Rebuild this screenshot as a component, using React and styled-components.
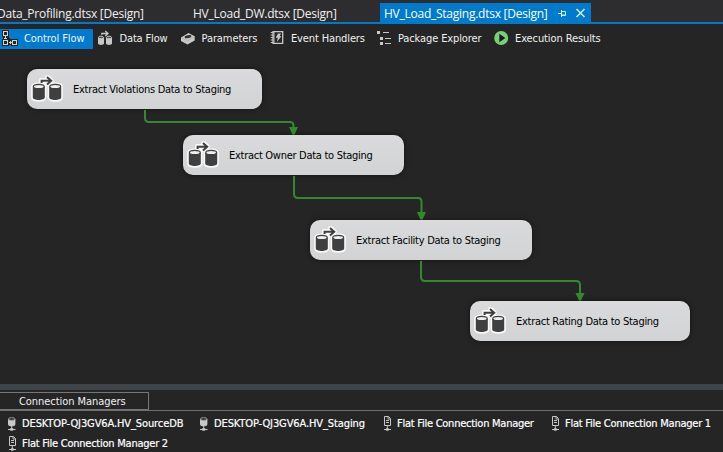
import React from "react";
import styled, { createGlobalStyle } from "styled-components";

const GlobalStyle = createGlobalStyle`
  * { box-sizing: border-box; }
  body { margin: 0; background: #252526; overflow: hidden; }
`;

const Window = styled.div`
  width: 723px;
  height: 452px;
  display: flex;
  flex-direction: column;
  overflow: hidden;
  background: #252526;
  color: #f1f1f1;
  font: 11px/14px "DejaVu Sans Condensed", "DejaVu Sans", sans-serif;
  white-space: nowrap;
`;

const TabStrip = styled.header`
  height: 24px;
  flex: none;
  display: flex;
  align-items: stretch;
  padding-top: 3px;
  background: #2d2d30;
  box-shadow: inset 0 -2px #007acc;
`;

const DocumentTab = styled.div`
  flex: none;
  width: ${(p) => p.$width}px;
  padding-left: ${(p) => p.$inset || 0}px;
  display: flex;
  align-items: center;
  background: ${(p) => (p.$active ? "#007acc" : "transparent")};
  color: ${(p) => (p.$active ? "#ffffff" : "#f1f1f1")};
  font: 12px/20px "Open Sans", "Noto Sans", sans-serif;
  letter-spacing: -0.25px;
`;

const TabTitle = styled.span`
  flex: none;
  width: ${(p) => p.$width}px;
`;

const ScrolledTitle = styled.span`
  margin-left: -3px;
`;

const Icon = styled.svg`
  flex: none;
  display: block;
  width: ${(p) => p.$width || 18}px;
  height: ${(p) => p.$height || 18}px;
`;

const Toolbar = styled.nav`
  height: 32px;
  flex: none;
  display: flex;
  align-items: flex-start;
  padding-top: 5px;
`;

const ViewButton = styled.div`
  flex: none;
  width: ${(p) => p.$width}px;
  margin-right: ${(p) => (p.$active ? 3 : 0)}px;
  height: 20px;
  display: flex;
  align-items: center;
  gap: ${(p) => p.$gap}px;
  padding-left: 1px;
  background: ${(p) => (p.$active ? "#007acc" : "transparent")};
  border-radius: 0 1px 1px 0;
  letter-spacing: ${(p) => p.$tracking}px;
`;

const ViewLabel = styled.span`
  height: 14px;
`;

const Canvas = styled.main`
  position: relative;
  height: 328px;
  flex: none;
`;

const Connectors = styled.svg`
  position: absolute;
  left: 0;
  top: 0;
  width: 723px;
  height: 328px;
`;

const TaskNode = styled.div`
  position: absolute;
  left: ${(p) => p.$x}px;
  top: ${(p) => p.$y}px;
  width: ${(p) => p.$width}px;
  height: 40px;
  display: flex;
  align-items: center;
  gap: 10px;
  padding-left: 3px;
  border-radius: 10px;
  background: linear-gradient(#dadadc, #d1d3d4);
  box-shadow: 0 0 5px rgba(0, 0, 0, 0.55);
  color: #000;
  letter-spacing: -0.28px;
`;

const TaskLabel = styled.span`
  padding-top: 2px;
`;

const Splitter = styled.div`
  height: 6px;
  flex: none;
  background: #3f4448;
`;

const ManagersHeader = styled.div`
  height: 21px;
  flex: none;
  padding-top: 2px;
  border-bottom: 1px solid #6e6e70;
`;

const ManagersTab = styled.div`
  width: 149px;
  height: 18px;
  padding: 2px 0 0 19px;
  border: solid #77777a;
  border-width: 1px 1px 1px 0;
  letter-spacing: -0.06px;
`;

const ManagerList = styled.section`
  flex: 1;
  display: flex;
  flex-wrap: wrap;
  align-content: flex-start;
  padding-top: 3px;
`;

const ManagerItem = styled.div`
  flex: none;
  width: ${(p) => p.$width}px;
  height: 20px;
  padding-left: 6px;
  display: flex;
  align-items: center;
  gap: 4px;
  color: #fff;
  -webkit-text-stroke: 0.2px #fff;
  letter-spacing: ${(p) => p.$tracking}px;
`;

const TabActions = () => (
  <Icon $width={32} $height={13} viewBox="0 0 32 13">
    <path d="M1 6.500h3.500M4.500 3v7M4.500 4.500h4v4h-4M4.500 8h4" fill="none" stroke="#d9ecf8" />
    <path d="m19.500 2 8 8m0-8-8 8" stroke="#d9ecf8" strokeWidth="1.500" />
  </Icon>
);

const FlowIcon = () => (
  <Icon viewBox="0 0 18 18" shapeRendering="crispEdges">
    <path d="M1 0h7v8h1v1h8v7h-7v-1h-2v1H1V9h1V7H1z" fill="#252526" />
    <path d="M2.500 1.500h4v4h-4zM2.500 10.500h4v4h-4zM11.500 10.500h4v4h-4z" fill="#252526" stroke="#d6d6d6" />
    <path d="M4 6h1v3H4zM3 8h3v1H3zM8 12h3v1H8zM9 11h1v3H9z" fill="#d6d6d6" />
  </Icon>
);

const DataIcon = () => (
  <Icon viewBox="0 0 18 18">
    <path d="M4.800 4.800V3.500h6M8.300 1l2.700 2.500L8.300 6" fill="none" stroke="#c8c8c8" strokeWidth="1.300" />
    <path d="M1 7.500v5.800c0 2.100 6 2.100 6 0V7.500zM9 7.500v5.800c0 2.100 6 2.100 6 0V7.500z" fill="#c8c8c8" />
    <ellipse cx="4" cy="7.500" rx="2.600" ry="1.300" fill="#505050" stroke="#c8c8c8" strokeWidth=".9" />
    <ellipse cx="12" cy="7.500" rx="2.600" ry="1.300" fill="#505050" stroke="#c8c8c8" strokeWidth=".9" />
  </Icon>
);

const ParametersIcon = () => (
  <Icon viewBox="0 0 18 18">
    <path d="M1 7.500 8.500 3l6.200 3.300v4.200L7.500 14.500 1 11z" fill="#c8c8c8" />
    <path d="m1.300 7.600 6.200 3.200 7-4.200" fill="none" stroke="#a0a0a0" strokeWidth=".5" />
    <ellipse cx="8" cy="6.700" rx="3.400" ry="1.400" fill="#303031" transform="rotate(-12 8 6.700)" />
  </Icon>
);

const EventIcon = () => (
  <Icon viewBox="0 0 18 18">
    <path d="M4 1.700h9.700v11.600H4z" fill="#252526" stroke="#c8c8c8" strokeWidth="1.300" />
    <path d="M5 2v11" stroke="#c8c8c8" />
    <path d="M1.700 2.500H4M1.700 5H4M1.700 7.500H4M1.700 10H4M1.700 12.500H4" stroke="#c8c8c8" />
    <path d="M9 3.500h3L10.700 6.300h1.800L7.800 12l1-4.200H6.700z" fill="#c8c8c8" />
  </Icon>
);

const ExplorerIcon = () => (
  <Icon viewBox="0 0 18 18" shapeRendering="crispEdges" fill="#c8c8c8">
    <path d="M1 1h3v3H1zM4 7h3v3H4zM4 12h3v3H4z" />
    <path d="M7 2h6v1H7zM9 8h6v1H9zM9 13h6v1H9z" />
  </Icon>
);

const RunIcon = () => (
  <Icon viewBox="0 0 18 18">
    <circle cx="7.200" cy="8" r="7" fill="#77cf77" />
    <path d="m5.300 3.800 6 4.200-6 4.200z" fill="#151d15" />
  </Icon>
);

const TaskIcon = () => (
  <Icon $width={33} $height={30} viewBox="0 0 33 30">
    <g fill="#f8f8f8" stroke="#f8f8f8" strokeWidth="3.400" strokeLinejoin="round">
      <path d="M2.800 12.500v11c0 3.300 12 3.300 12 0v-11c0-3-12-3-12 0zM19.200 12.500v11c0 3.300 12 3.300 12 0v-11c0-3-12-3-12 0z" />
      <path d="M10.700 9V5.700h6V3h2l3.500 3.700-3.500 3.800z" />
    </g>
    <path d="M11.600 9V6.700h9.500M17 3l4.200 3.700-4.200 3.800" fill="none" stroke="#3f3f40" strokeWidth="2" />
    <path d="M2.800 12.500v11c0 3.300 12 3.300 12 0v-11zM19.200 12.500v11c0 3.300 12 3.300 12 0v-11z" fill="#3f3f40" />
    <ellipse cx="8.800" cy="12.500" rx="5.400" ry="2.100" fill="#eee" stroke="#3f3f40" strokeWidth="1.200" />
    <ellipse cx="25.200" cy="12.500" rx="5.400" ry="2.100" fill="#eee" stroke="#3f3f40" strokeWidth="1.200" />
  </Icon>
);

const DatabaseIcon = () => (
  <Icon $width={12} $height={16} viewBox="0 0 12 16">
    <path d="M2 3v5.400c0 2.400 7.400 2.400 7.400 0V3z" fill="#c8c8c8" />
    <ellipse cx="5.700" cy="3" rx="3.300" ry="1.400" fill="#303031" stroke="#a8a8a8" strokeWidth=".8" />
    <path d="M5.700 9v4M2 13.500h7.500" stroke="#c8c8c8" />
    <path d="M4.200 12.200h3v2.500h-3z" fill="#c8c8c8" />
  </Icon>
);

const FileIcon = () => (
  <Icon $width={12} $height={16} viewBox="0 0 12 16">
    <path d="M3.500.5h4l2 2v7h-6zM7 .5V3h2M5 4.500h3M5 6.500h3" fill="none" stroke="#c8c8c8" />
    <path d="M6.300 9v5M3 13.500h7" stroke="#c8c8c8" />
    <path d="M5 12.300h2.700v2.400H5z" fill="#c8c8c8" />
  </Icon>
);

const views = [
  { label: "Control Flow", width: 93, gap: 5, icon: FlowIcon, tracking: -0.08 },
  { label: "Data Flow", width: 83, gap: 4.5, icon: DataIcon, tracking: -0.15 },
  { label: "Parameters", width: 89, gap: 3.5, icon: ParametersIcon, tracking: -0.08 },
  { label: "Event Handlers", width: 107, gap: 4, icon: EventIcon, tracking: -0.13 },
  { label: "Package Explorer", width: 118, gap: 4, icon: ExplorerIcon, tracking: -0.12 },
  { label: "Execution Results", width: 120, gap: 3, icon: RunIcon, tracking: -0.1 },
];

const tasks = [
  { label: "Extract Violations Data to Staging", x: 27, y: 13, width: 235 },
  { label: "Extract Owner Data to Staging", x: 183, y: 79, width: 221 },
  { label: "Extract Facility Data to Staging", x: 310, y: 164, width: 222 },
  { label: "Extract Rating Data to Staging", x: 470, y: 245, width: 220 },
];

const managers = [
  { label: "DESKTOP-QJ3GV6A.HV_SourceDB", width: 192, icon: DatabaseIcon, tracking: -0.11 },
  { label: "DESKTOP-QJ3GV6A.HV_Staging", width: 183, icon: DatabaseIcon, tracking: -0.11 },
  { label: "Flat File Connection Manager", width: 168, icon: FileIcon, tracking: -0.25 },
  { label: "Flat File Connection Manager 1", width: 175, icon: FileIcon, tracking: -0.24 },
  { label: "Flat File Connection Manager 2", width: 192, icon: FileIcon, tracking: -0.24 },
];

export default function App() {
  return (
    <>
      <GlobalStyle />
      <Window>
        <TabStrip>
          <DocumentTab $width={193}>
            <ScrolledTitle>Data_Profiling.dtsx [Design]</ScrolledTitle>
          </DocumentTab>
          <DocumentTab $width={187}>HV_Load_DW.dtsx [Design]</DocumentTab>
          <DocumentTab $width={211} $inset={4} $active>
            <TabTitle $width={173}>HV_Load_Staging.dtsx [Design]</TabTitle>
            <TabActions />
          </DocumentTab>
        </TabStrip>

        <Toolbar>
          {views.map(({ label, width, gap, icon: Glyph, tracking }, index) => (
            <ViewButton key={label} $width={width} $gap={gap} $tracking={tracking} $active={index === 0}>
              <Glyph />
              <ViewLabel>{label}</ViewLabel>
            </ViewButton>
          ))}
        </Toolbar>

        <Canvas>
          {tasks.map((task) => (
            <TaskNode key={task.label} $x={task.x} $y={task.y} $width={task.width}>
              <TaskIcon />
              <TaskLabel>{task.label}</TaskLabel>
            </TaskNode>
          ))}
          <Connectors viewBox="0 0 723 328">
            <g fill="none" stroke="#338a2e" strokeWidth="2">
              <path d="M145 54v8q0 4 4 4h141q3.500 0 3.500 4v4" />
              <path d="M294 120v18q0 4 4 4h120q3.500 0 3.500 4v11" />
              <path d="M421 205v16q0 4 4 4h151q4 0 4 4v10" />
            </g>
            <g fill="#338a2e">
              <path d="M289 71h9l-3.500 7.500h-2z" />
              <path d="M417 156h9l-3.500 7.500h-2z" />
              <path d="M575.500 237h9l-3.500 7.500h-2z" />
            </g>
          </Connectors>
        </Canvas>

        <Splitter />
        <ManagersHeader>
          <ManagersTab>Connection Managers</ManagersTab>
        </ManagersHeader>
        <ManagerList>
          {managers.map(({ label, width, icon: Glyph, tracking }) => (
            <ManagerItem key={label} $width={width} $tracking={tracking}>
              <Glyph />
              <span>{label}</span>
            </ManagerItem>
          ))}
        </ManagerList>
      </Window>
    </>
  );
}
